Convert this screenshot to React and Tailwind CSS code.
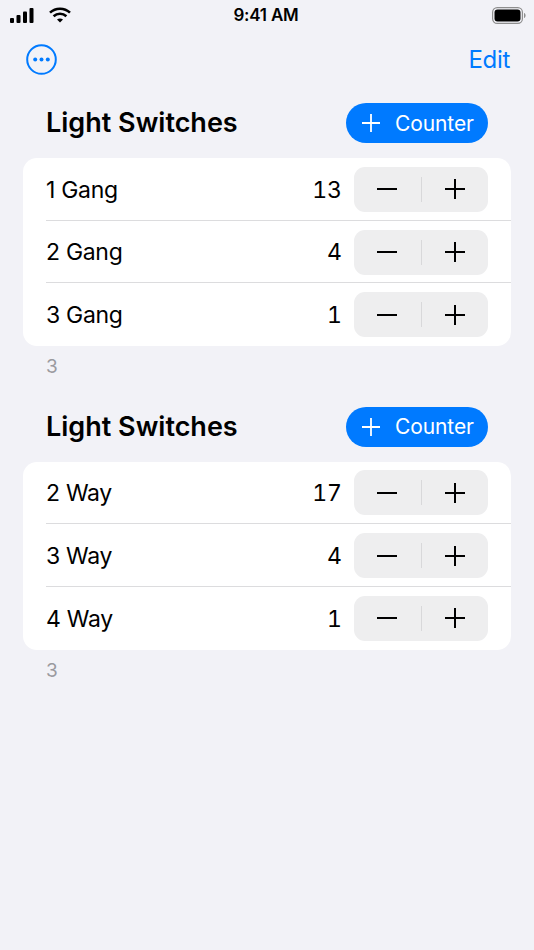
import React from "react";

function Signal() {
  return (
    <svg width="24" height="15" viewBox="0 0 24 15" fill="#000">
      <rect x="0" y="10" width="4" height="5" rx="1" />
      <rect x="6.5" y="7" width="4" height="8" rx="1" />
      <rect x="13" y="3.5" width="4" height="11.5" rx="1" />
      <rect x="19.5" y="0" width="4" height="15" rx="1" />
    </svg>
  );
}

function Wifi() {
  return (
    <svg width="22" height="16" viewBox="0 0 22 16" fill="none" stroke="#000" strokeWidth="2.6">
      <path d="M1 5.6C6.6 0.4 15.4 0.4 21 5.6" />
      <path d="M4.6 9.2C8.2 5.9 13.8 5.9 17.4 9.2" />
      <path d="M8 12.6C9.7 11.1 12.3 11.1 14 12.6L11 15.4Z" fill="#000" stroke="none" />
    </svg>
  );
}

function Battery() {
  return (
    <svg width="34" height="17" viewBox="0 0 34 17">
      <rect x="0.6" y="0.6" width="29.8" height="15.8" rx="4.6" fill="none" stroke="#8e8e8e" strokeWidth="1.2" />
      <rect x="2.5" y="2.5" width="26" height="12" rx="3" fill="#000" />
      <path d="M32 6v5c1-.3 1.6-1.3 1.6-2.5S33 6.300 32 6Z" fill="#8e8e8e" />
    </svg>
  );
}

function Stepper() {
  return (
    <div className="flex h-[45px] w-[134px] items-center rounded-[11px] bg-[#eeeeef]">
      <div className="flex flex-1 items-center justify-center">
        <svg width="20" height="20" viewBox="0 0 20 20" stroke="#000" strokeWidth="2">
          <path d="M0 10H20" />
        </svg>
      </div>
      <div className="h-[25px] w-px bg-[#d8d8da]" />
      <div className="flex flex-1 items-center justify-center">
        <svg width="20" height="20" viewBox="0 0 20 20" stroke="#000" strokeWidth="2">
          <path d="M0 10H20M10 0V20" />
        </svg>
      </div>
    </div>
  );
}

function Row({ label, value, last }) {
  return (
    <div className="flex h-[62.7px] items-stretch pl-[23px]">
      <div className={"flex flex-1 items-center pr-[23px] " + (last ? "" : "border-b border-[#dcdcde] pt-px")}>
        <span className="flex-1 pt-[1px] text-[23px] tracking-[-0.3px] text-[#000]">{label}</span>
        <span className="mr-[12px] pt-[1px] text-[23px] tabular-nums text-[#000]">{value}</span>
        <Stepper />
      </div>
    </div>
  );
}

function Section({ rows }) {
  return (
    <section className="mb-[27.5px]">
      <div className="flex h-[40px] items-center justify-between pl-[46px] pr-[46px]">
        <h2 className="pt-px text-[27px] font-semibold text-[#000]">Light Switches</h2>
        <div className="flex h-[40px] w-[142px] items-center rounded-[20px] bg-[#007aff] pl-[16px] text-white">
          <svg width="18" height="18" viewBox="0 0 18 18" stroke="#fff" strokeWidth="1.8">
            <path d="M0 9H18M9 0V18" />
          </svg>
          <span className="ml-[15px] pt-px text-[21px] tracking-[-0.1px]">Counter</span>
        </div>
      </div>
      <div className="mx-[23px] mt-[15px] overflow-hidden rounded-[14px] bg-white">
        {rows.map((r, i) => (
          <Row key={r[0]} label={r[0]} value={r[1]} last={i === rows.length - 1} />
        ))}
      </div>
      <div className="mt-[9px] h-[24px] pl-[46px] text-[19px] leading-[24px] text-[#9a9a9f]">3</div>
    </section>
  );
}

export default function App() {
  return (
    <div className="h-[950px] w-[534px] overflow-hidden bg-[#f2f2f7] font-['Inter',sans-serif]">
      <div className="flex h-[30px] items-center pl-[10px] pr-[8px]">
        <div className="flex w-[201px] items-center gap-[15px]">
          <Signal />
          <Wifi />
        </div>
        <div className="w-[110px] pt-px text-center text-[17px] font-semibold tracking-[-0.2px] text-black">9:41 AM</div>
        <div className="flex flex-1 justify-end">
          <Battery />
        </div>
      </div>
      <div className="flex h-[60px] items-center justify-between pb-[2px] pl-[26px] pr-[24px]">
        <svg width="31" height="31" viewBox="0 0 31 31" fill="#007aff">
          <circle cx="15.500" cy="15.500" r="14.300" fill="none" stroke="#007aff" strokeWidth="2" />
          <circle cx="9.200" cy="15.500" r="2" />
          <circle cx="15.500" cy="15.500" r="2" />
          <circle cx="21.800" cy="15.500" r="2" />
        </svg>
        <span className="pt-px text-[24px] tracking-[-0.3px] text-[#007aff]">Edit</span>
      </div>
      <div className="pt-[13px]">
        <Section rows={[["1 Gang", "13"], ["2 Gang", "4"], ["3 Gang", "1"]]} />
        <Section rows={[["2 Way", "17"], ["3 Way", "4"], ["4 Way", "1"]]} />
      </div>
    </div>
  );
}
